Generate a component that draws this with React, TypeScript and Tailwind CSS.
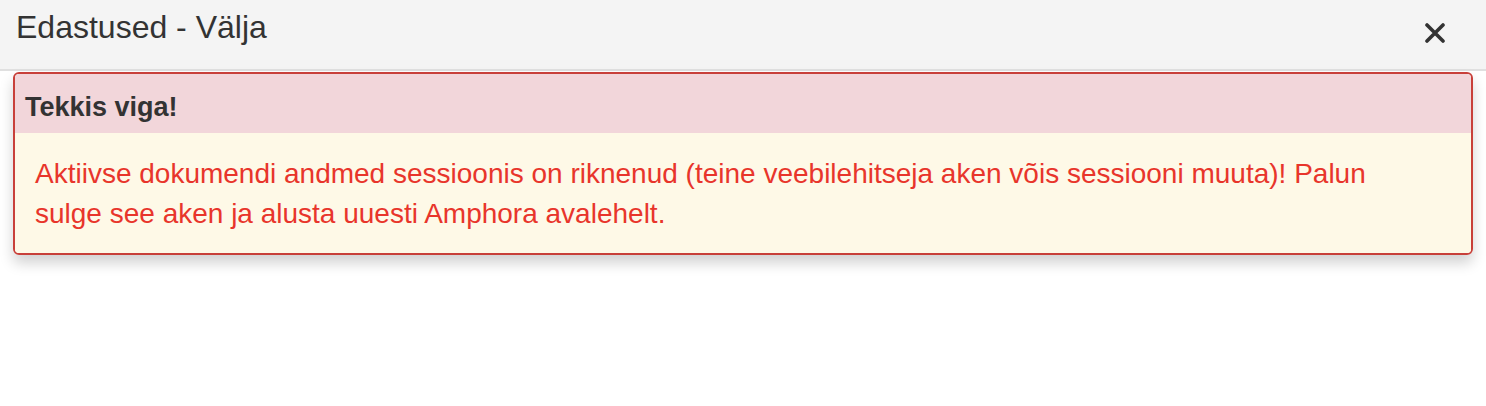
export default function App() {
  return (
    <div className="min-h-screen bg-white" style={{ fontFamily: '"Liberation Sans", Arial, sans-serif' }}>
      {/* Modal header */}
      <div className="flex h-[71px] items-start justify-between border-b-2 border-[#e0e0e0] bg-[#f4f4f4] pl-4 pr-[40px]">
        <h1 className="mt-[7px] text-[32px] leading-[40px] font-normal text-[#333333]">Edastused - Välja</h1>
        <button className="mt-[23px] text-[#333333]" aria-label="Sulge">
          <svg width="22" height="20" viewBox="0 0 22 20">
            <path d="M3 2 L19 18 M19 2 L3 18" stroke="#333333" strokeWidth="3.6" strokeLinecap="round" />
          </svg>
        </button>
      </div>

      {/* Error panel */}
      <div className="mx-[13px] mt-px w-[1460px] overflow-hidden rounded-[6px] border-2 border-[#c8403a] shadow-[0_8px_14px_rgba(0,0,0,0.18)]">
        <div className="bg-[#f2d6da] px-[10px] pt-[17px] pb-[10px]">
          <h2 className="text-[27px] leading-[32px] font-bold text-[#333333]">Tekkis viga!</h2>
        </div>
        <div className="bg-[#fef9e7] pt-[21px] pr-[40px] pb-[19px] pl-5">
          <p className="text-[28px] leading-[40px] text-[#e8352b]">
            Aktiivse dokumendi andmed sessioonis on riknenud (teine veebilehitseja aken võis sessiooni muuta)! Palun
            sulge see aken ja alusta uuesti Amphora avalehelt.
          </p>
        </div>
      </div>
    </div>
  );
}
